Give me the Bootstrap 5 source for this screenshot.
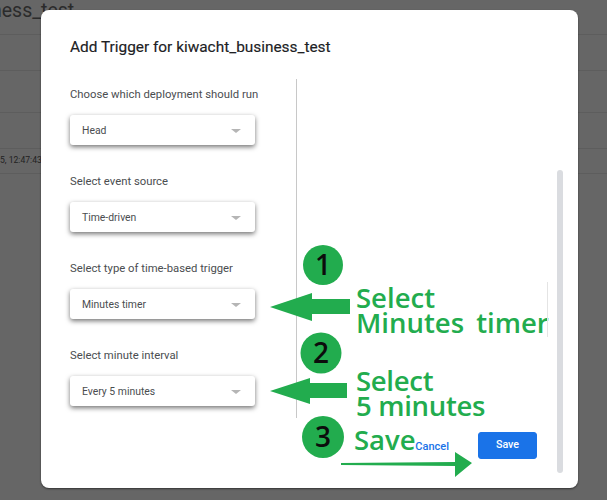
<!DOCTYPE html>
<html lang="en">
<head>
<meta charset="utf-8">
<title>Add Trigger</title>
<link href="https://cdn.jsdelivr.net/npm/bootstrap@5.3.0/dist/css/bootstrap.min.css" rel="stylesheet">
<style>
html,body{height:100%;overflow:hidden}
body{background:#666;font-family:Roboto,"Liberation Sans",sans-serif;position:relative}
.back-title{font-size:19.5px;line-height:20px;height:34px;padding-top:1px;margin-left:-9px;color:#2b2b2b;white-space:nowrap;font-family:Roboto,sans-serif;overflow:hidden}
.back-row{border-top:1px solid #5d5d5d;font-size:8.6px;color:#222}
.r1{height:36px}.r2{height:42px}.r3{height:36px}.r4{height:25px;line-height:23px}
.sheet{position:absolute;left:41px;top:10px;width:537px;height:478px;border-radius:8px;box-shadow:0 1px 2px rgba(0,0,0,.5);padding:26px 15px 0 29px}
.sheet-title{font-size:15.4px;font-weight:400;line-height:22px;color:#202124;margin:0 0 21px;-webkit-text-stroke:.15px #202124}
.form-col{width:227px;height:339px;border-right:1px solid #c8c8c8;padding-top:8px}
.field-label{font-size:11.3px;line-height:16px;color:#4a4d50;height:16px;margin:0 0 12px}
.field-box{width:185px;height:30px;border-radius:3px;box-shadow:0 2px 5px rgba(0,0,0,.55);padding:1px 14px 0 12px;font-size:10.4px;color:#4a4d50;margin-bottom:29px}
.caret-tri{width:0;height:0;border-left:5px solid transparent;border-right:5px solid transparent;border-top:4.5px solid #b5b5b5}
.sheet-foot{position:absolute;right:41px;top:422px;gap:29px}
.cancel-link{font-size:11px;font-weight:500;color:#1a73e8;text-decoration:none;line-height:14px;margin-top:2px}
.save-btn{width:59px;height:27px;padding:0;font-size:10.7px;font-weight:500;border-radius:3px;background:#1a73e8;border-color:#1a73e8;--bs-btn-bg:#1a73e8}
.scroll-thumb{position:absolute;left:516px;top:160px;width:6px;height:303px;background:#dadce0;border-radius:3px}
.marks{position:absolute;left:0;top:0;width:607px;height:500px;pointer-events:none}
.note{position:absolute;font-family:"Open Sans",sans-serif;color:#22ac4e;font-size:27.5px;font-weight:600;line-height:25px;white-space:nowrap}
.n1{left:356px;top:285px;word-spacing:5px}
.n2{left:356px;top:368px;letter-spacing:-.3px}
.n3{left:354px;top:427px}
.rule{position:absolute;left:547px;top:282px;width:1px;height:55px;background:#e4e4e4}
.num{font-family:"Open Sans",sans-serif;font-size:28px;font-weight:600;fill:#0c0c0c}
</style>
</head>
<body>
<div class="back-title">ness_test</div>
<div class="back-row r1"></div>
<div class="back-row r2"></div>
<div class="back-row r3"></div>
<div class="back-row r4">5, 12:47:43</div>
<div class="back-row"></div>

<div class="sheet bg-white">
  <h2 class="sheet-title">Add Trigger for kiwacht_business_test</h2>
  <div class="form-col">
    <div class="field-label">Choose which deployment should run</div>
    <div class="field-box bg-white d-flex align-items-center justify-content-between"><span>Head</span><span class="caret-tri"></span></div>
    <div class="field-label">Select event source</div>
    <div class="field-box bg-white d-flex align-items-center justify-content-between"><span>Time-driven</span><span class="caret-tri"></span></div>
    <div class="field-label">Select type of time-based trigger</div>
    <div class="field-box bg-white d-flex align-items-center justify-content-between"><span>Minutes timer</span><span class="caret-tri"></span></div>
    <div class="field-label">Select minute interval</div>
    <div class="field-box bg-white d-flex align-items-center justify-content-between"><span>Every 5 minutes</span><span class="caret-tri"></span></div>
  </div>
  <div class="sheet-foot d-flex align-items-center">
    <a class="cancel-link" href="#">Cancel</a>
    <button class="btn btn-primary save-btn" type="button">Save</button>
  </div>
  <div class="scroll-thumb"></div>
</div>

<svg class="marks" viewBox="0 0 607 500" xmlns="http://www.w3.org/2000/svg">
  <circle cx="323" cy="265" r="20" fill="#22ac4e"/>
  <circle cx="321" cy="353" r="20.5" fill="#22ac4e"/>
  <circle cx="323" cy="437" r="21" fill="#22ac4e"/>
  <text class="num" x="323" y="275" text-anchor="middle">1</text>
  <text class="num" x="321" y="363" text-anchor="middle">2</text>
  <text class="num" x="323" y="447" text-anchor="middle">3</text>
  <polygon fill="#22ac4e" points="270,307 312,293 312,299 350,299 350,314 312,314 312,321"/>
  <polygon fill="#22ac4e" points="270,391 310,378 310,383 347,383 347,398 310,398 310,404"/>
  <polygon fill="#22ac4e" points="341,463 455,462 455,452 472,463 455,477 455,466 341,465"/>
</svg>
<div class="note n1">Select<br>Minutes timer</div>
<div class="note n2">Select<br>5 minutes</div>
<div class="note n3">Save</div>
<div class="rule"></div>
<script src="https://cdn.jsdelivr.net/npm/bootstrap@5.3.0/dist/js/bootstrap.bundle.min.js"></script>
</body>
</html>
